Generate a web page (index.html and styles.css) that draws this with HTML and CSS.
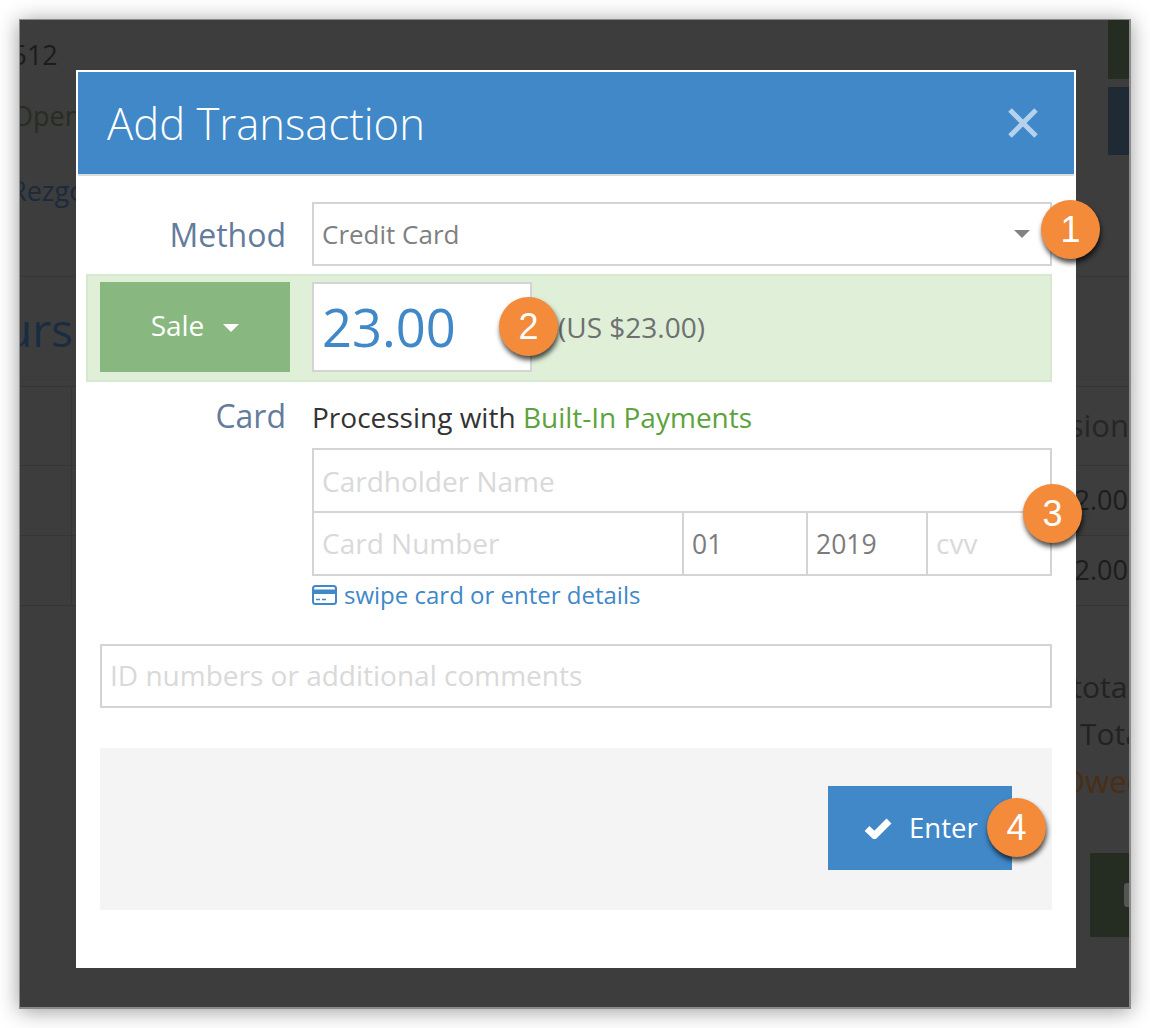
FILE: index.html
```html
<!DOCTYPE html>
<html lang="en">
<head>
<meta charset="utf-8">
<title>Add Transaction</title>
<link rel="stylesheet" href="styles.css">
</head>
<body>
<div class="window">
  <div class="backdrop">
    <span class="bg bg-512">1512</span>
    <span class="bg bg-open">Open</span>
    <span class="bg bg-rezgo">Rezgo</span>
    <span class="bg bg-tours">Tours</span>
    <span class="bg bg-sion">Commission</span>
    <span class="bg bg-a1">12.00</span>
    <span class="bg bg-a2">12.00</span>
    <span class="bg bg-sub">Subtotal</span>
    <span class="bg bg-tot">Total</span>
    <span class="bg bg-owe">Owed</span>
    <i class="rule r1"></i><i class="rule r2"></i><i class="rule r3"></i><i class="rule r4"></i><i class="rule r5"></i><i class="rule r6"></i>
    <i class="vrule"></i>
    <i class="block b-green"></i><i class="block b-blue"></i><i class="block b-btn"><b class="btn-mark"></b></i>
  </div>

  <div class="modal">
    <header class="modal-head">
      <h1 class="modal-title">Add Transaction</h1>
      <svg class="close" viewBox="0 0 30 30" width="30" height="30" aria-label="Close"><path d="M2 2 28 28M28 2 2 28" stroke="#b5d2ec" stroke-width="5" fill="none"/></svg>
    </header>

    <div class="row method-row">
      <label class="label">Method</label>
      <div class="select">
        <span>Credit Card</span>
        <i class="caret"></i>
      </div>
    </div>

    <div class="amount-row">
      <div class="sale">Sale<i class="caret caret-white"></i></div>
      <div class="amount">23.00</div>
      <div class="converted">(US $23.00)</div>
    </div>

    <div class="row card-row">
      <label class="label">Card</label>
      <div class="card-main">
        <div class="processing">Processing with <span class="green">Built-In Payments</span></div>
        <div class="card-grid">
          <div class="cell cell-name ph">Cardholder Name</div>
          <div class="cell ph">Card Number</div>
          <div class="cell val">01</div>
          <div class="cell val">2019</div>
          <div class="cell ph">cvv</div>
        </div>
        <a class="swipe">
          <svg viewBox="0 0 25 20" width="25" height="20"><rect x="1" y="1" width="23" height="18" rx="2.5" fill="none" stroke="#4088c8" stroke-width="2"/><rect x="1" y="4.5" width="23" height="4.5" fill="#4088c8"/><path d="M4 14.5h4M10 14.5h4" stroke="#4088c8" stroke-width="1.6"/></svg>
          swipe card or enter details
        </a>
      </div>
    </div>

    <div class="comments ph">ID numbers or additional comments</div>

    <footer class="foot">
      <button class="enter">
        <svg viewBox="0 0 28 22" width="28" height="22"><path d="M3 11.5 10.5 18.5 25 4" fill="none" stroke="#fff" stroke-width="7"/></svg>
        <span class="enter-text">Enter</span>
      </button>
    </footer>
  </div>

  <span class="badge badge-1">1</span>
  <span class="badge badge-2">2</span>
  <span class="badge badge-3">3</span>
  <span class="badge badge-4">4</span>
</div>
</body>
</html>
```
FILE: styles.css
```css
* { box-sizing: border-box; }
html, body { margin: 0; padding: 0; background: #fff; }
body { width: 1150px; height: 1028px; overflow: hidden; font-family: "Open Sans", sans-serif; }

.window {
  position: relative;
  width: 1112px;
  height: 990px;
  margin: 19px 0 0 19px;
  padding: 50px 0 0 56px;
  background: #3d3d3d;
  border: 1px solid #8a8a8a;
  border-width: 1px 2px 2px 1px;
  box-shadow: 0 2px 20px rgba(0, 0, 0, .4);
}

.backdrop { position: absolute; inset: 0; overflow: hidden; }
.bg { position: absolute; white-space: nowrap; line-height: 1; font-size: 27px; color: #1c1c1c; }
.bg-512 { left: -24px; top: 21px; }
.bg-open { left: -8px; top: 82px; color: #262e22; }
.bg-rezgo { left: -10px; top: 157px; color: #1b2a3c; }
.bg-tours { left: -69px; top: 286px; font-size: 46px; color: #1a2c42; }
.bg-sion { right: 0; top: 390px; font-size: 31px; width: 60px; direction: rtl; color: #262626; }
.bg-a1 { right: 1px; top: 466px; }
.bg-a2 { right: 1px; top: 536px; }
.bg-sub { left: 998px; top: 652px; font-size: 30px; color: #222; }
.bg-tot { left: 1060px; top: 699px; font-size: 30px; color: #222; }
.bg-owe { left: 1041px; top: 746px; font-size: 31px; color: #4a2d15; }

.rule { position: absolute; left: 0; right: 0; height: 1px; background: #363636; }
.r1 { top: 256px; } .r2 { top: 356px; background: #333c45; } .r3 { top: 366px; }
.r4 { top: 445px; } .r5 { top: 515px; } .r6 { top: 585px; }
.vrule { position: absolute; left: 51px; top: 366px; width: 1px; height: 220px; background: #363636; }

.block { position: absolute; display: block; }
.b-green { left: 1088px; top: 0; width: 24px; height: 59px; background: #252d22; }
.b-blue { left: 1088px; top: 67px; width: 24px; height: 68px; background: #1f2a35; }
.b-btn { left: 1070px; top: 833px; width: 42px; height: 84px; background: #252d22; }
.btn-mark { position: absolute; left: 34px; top: 30px; width: 10px; height: 24px; border-radius: 3px; background: #555; }

.modal {
  position: relative;
  display: flex;
  flex-direction: column;
  width: 1000px;
  height: 898px;
  background: #fff;
}

.modal-head {
  display: flex;
  align-items: center;
  justify-content: space-between;
  height: 104px;
  margin: 2px 2px 0;
  padding: 0 36px 0 29px;
  background: #4088c8;
  border-bottom: 2px solid #dcdcdc;
}
.modal-title { margin: 2px 0 0; font-size: 43.6px; font-weight: 300; color: #fff; line-height: 1; }
.close { display: block; }

.row { display: flex; }
.label { width: 210px; text-align: right; font-size: 32px; color: #647c9b; flex: none; }
.method-row { align-items: center; margin-top: 26px; }
.select {
  display: flex;
  align-items: center;
  justify-content: space-between;
  width: 740px;
  height: 64px;
  margin-left: 26px;
  padding: 0 20px 0 8px;
  border: 2px solid #d4d4d4;
  font-size: 26px;
  color: #808080;
}
.caret { display: block; width: 0; height: 0; border: 8px solid transparent; border-top: 8px solid #828282; border-bottom: 0; }

.amount-row {
  display: flex;
  align-items: center;
  width: 966px;
  height: 108px;
  margin: 8px 0 0 10px;
  padding: 0 12px;
  background: #dfefd8;
  border: 2px solid #d6e8cd;
}
.sale {
  display: flex;
  align-items: center;
  justify-content: center;
  gap: 19px;
  width: 190px;
  height: 90px;
  margin-top: -2px;
  padding-bottom: 4px;
  background: #88b87f;
  color: #fff;
  font-size: 28px;
}
.caret-white { border-top-color: #fff; margin-top: 6px; }
.amount {
  width: 220px;
  height: 90px;
  margin: -2px 0 0 22px;
  padding-left: 8px;
  background: #fff;
  border: 2px solid #d4d4d4;
  color: #4088c8;
  font-size: 52.5px;
  line-height: 86px;
}
.converted { margin: -2px 0 0 26px; font-size: 28px; color: #707070; }

.card-row { margin-top: 14px; }
.card-row .label { line-height: 40px; }
.card-main { width: 740px; margin-left: 26px; }
.processing { font-size: 28px; line-height: 42px; color: #333; }
.green { color: #5da33d; }
.card-grid {
  display: grid;
  grid-template-columns: 370px 124px 120px 124px;
  grid-template-rows: 63px 63px;
  margin-top: 10px;
  border-top: 2px solid #d4d4d4;
  border-left: 2px solid #d4d4d4;
}
.cell {
  display: flex;
  align-items: center;
  padding: 0 0 2px 8px;
  border-right: 2px solid #d4d4d4;
  border-bottom: 2px solid #d4d4d4;
  font-size: 28px;
}
.cell-name { grid-column: 1 / -1; padding-bottom: 0; }
.ph { color: #d9d9d9; }
.val { padding-bottom: 0; color: #7c7c7c; font-size: 26.5px; }
.swipe { display: flex; align-items: center; gap: 7px; height: 39px; padding-bottom: 2px; font-size: 24px; color: #4088c8; }

.comments {
  display: flex;
  align-items: center;
  width: 952px;
  height: 64px;
  margin: 29px 0 0 24px;
  padding: 0 0 2px 8px;
  border: 2px solid #d4d4d4;
  font-size: 28px;
}

.foot {
  display: flex;
  justify-content: flex-end;
  align-items: flex-start;
  width: 952px;
  height: 162px;
  margin: 40px 0 0 24px;
  padding: 38px 40px 0 0;
  background: #f4f4f4;
}
.enter {
  display: flex;
  align-items: center;
  justify-content: flex-start;
  gap: 17px;
  width: 184px;
  height: 84px;
  padding: 0 0 0 36px;
  border: 0;
  background: #4088c8;
  color: #fff;
  font-family: inherit;
  font-size: 27.5px;
}
.enter-text { margin-top: -2px; }

.badge {
  position: absolute;
  display: flex;
  align-items: center;
  justify-content: center;
  width: 59px;
  height: 59px;
  border-radius: 50%;
  background: #f38b3a;
  color: #fff;
  font-family: "Liberation Sans", Arial, sans-serif;
  font-size: 36px;
  box-shadow: 1px 4px 5px rgba(0, 0, 0, .7);
}
.badge-1 { left: 1021px; top: 180px; }
.badge-2 { left: 479px; top: 277px; }
.badge-3 { left: 1003px; top: 464px; }
.badge-4 { left: 967px; top: 778px; }
```
